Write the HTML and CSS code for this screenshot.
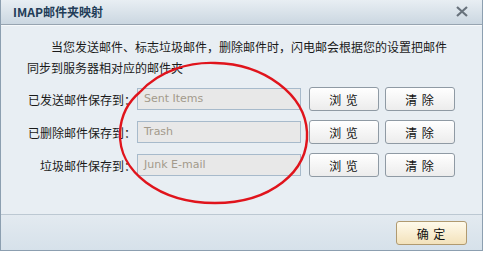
FILE: index.html
```html
<!DOCTYPE html>
<html>
<head>
<meta charset="utf-8">
<link rel="stylesheet" href="styles.css">
</head>
<body>
<div class="dialog">
  <div class="titlebar">
    <span class="title">IMAP邮件夹映射</span>
    <svg class="close" width="12" height="11" viewBox="0 0 12 11"><path d="M1 1 L11 10 M11 1 L1 10" stroke="#68727c" stroke-width="2.2" fill="none"/></svg>
  </div>
  <div class="content">
    <p class="desc">当您发送邮件、标志垃圾邮件，删除邮件时，闪电邮会根据您的设置把邮件同步到服务器相对应的邮件夹</p>
    <div class="rows">
      <div class="row">
        <span class="label">已发送邮件保存到：</span>
        <div class="field">Sent Items</div>
        <button class="btn">浏 览</button>
        <button class="btn">清 除</button>
      </div>
      <div class="row">
        <span class="label">已删除邮件保存到：</span>
        <div class="field">Trash</div>
        <button class="btn">浏 览</button>
        <button class="btn">清 除</button>
      </div>
      <div class="row">
        <span class="label">垃圾邮件保存到：</span>
        <div class="field">Junk E-mail</div>
        <button class="btn">浏 览</button>
        <button class="btn">清 除</button>
      </div>
    </div>
  </div>
  <div class="footer">
    <button class="ok">确 定</button>
  </div>
  <svg class="mark" width="483" height="253" viewBox="0 0 483 253">
    <path d="M140 92 C160 70 190 62 215 63 C265 64 305 95 307 132 C309 172 270 203 215 203 C160 203 118 172 120 132 C121 115 128 102 140 92" stroke="#e0141c" stroke-width="2.4" fill="none"/>
  </svg>
</div>
</body>
</html>
```
FILE: styles.css
```css
html, body {
  margin: 0;
  padding: 0;
}
body {
  width: 483px;
  height: 253px;
  overflow: hidden;
  background: #ffffff;
  font-family: "Noto Sans CJK SC", sans-serif;
  font-size: 12px;
}
.dialog {
  position: relative;
  width: 481px;
  height: 250px;
  border: 1px solid #8c9fb0;
  border-top: none;
  background: #e8eef3;
  display: flex;
  flex-direction: column;
}
.titlebar {
  height: 24px;
  flex: none;
  background: linear-gradient(#e8eef3, #cbd7e1);
  border-bottom: 1px solid #97a4b0;
  box-shadow: 0 1px 0 #f6f9fb;
  display: flex;
  align-items: center;
  justify-content: space-between;
  padding: 0 14px 0 12px;
}
.title {
  font-weight: bold;
  color: #233d58;
  font-size: 12px;
  line-height: 24px;
}
.close {
  display: block;
  margin-top: -2px;
}
.content {
  flex: 1;
  padding: 11px 0 0 26px;
  border-bottom: 1px solid #bcc8d2;
  box-shadow: 0 1px 0 #f4f7f9;
}
.desc {
  margin: 0;
  width: 420px;
  line-height: 21px;
  text-indent: 24px;
  color: #1a1a1a;
}
.rows {
  margin-top: 9px;
  display: flex;
  flex-direction: column;
  gap: 9px;
}
.row {
  display: flex;
  align-items: center;
  height: 24px;
}
.label {
  width: 109px;
  text-align: right;
  color: #1a1a1a;
  white-space: nowrap;
}
.field {
  width: 156px;
  height: 20px;
  margin-left: 1px;
  border: 1px solid #a7bacb;
  background: #e8e8e8;
  color: #a39a8b;
  font-family: "DejaVu Sans", sans-serif;
  font-size: 11px;
  line-height: 20px;
  padding-left: 6px;
}
.btn {
  width: 70px;
  height: 24px;
  margin-left: 8px;
  padding: 0;
  border: 1px solid #8f9aa4;
  border-radius: 3px;
  background: linear-gradient(#ffffff, #ececec);
  font-family: "Noto Sans CJK SC", sans-serif;
  font-size: 12px;
  color: #111;
  letter-spacing: 1px;
}
.btn + .btn {
  margin-left: 6px;
}
.footer {
  height: 35px;
  flex: none;
  background: linear-gradient(#e3eaf0, #d6e1ea);
  display: flex;
  align-items: center;
  justify-content: flex-end;
  padding-right: 15px;
}
.ok {
  width: 71px;
  height: 24px;
  padding: 0;
  border: 1px solid #b09a70;
  border-radius: 3px;
  background: linear-gradient(#fffaeb, #f3e2bb);
  font-family: "Noto Sans CJK SC", sans-serif;
  font-size: 12px;
  color: #111;
  letter-spacing: 1px;
  margin-top: 1px;
}
.mark {
  position: absolute;
  left: -1px;
  top: 0;
  pointer-events: none;
}
```
